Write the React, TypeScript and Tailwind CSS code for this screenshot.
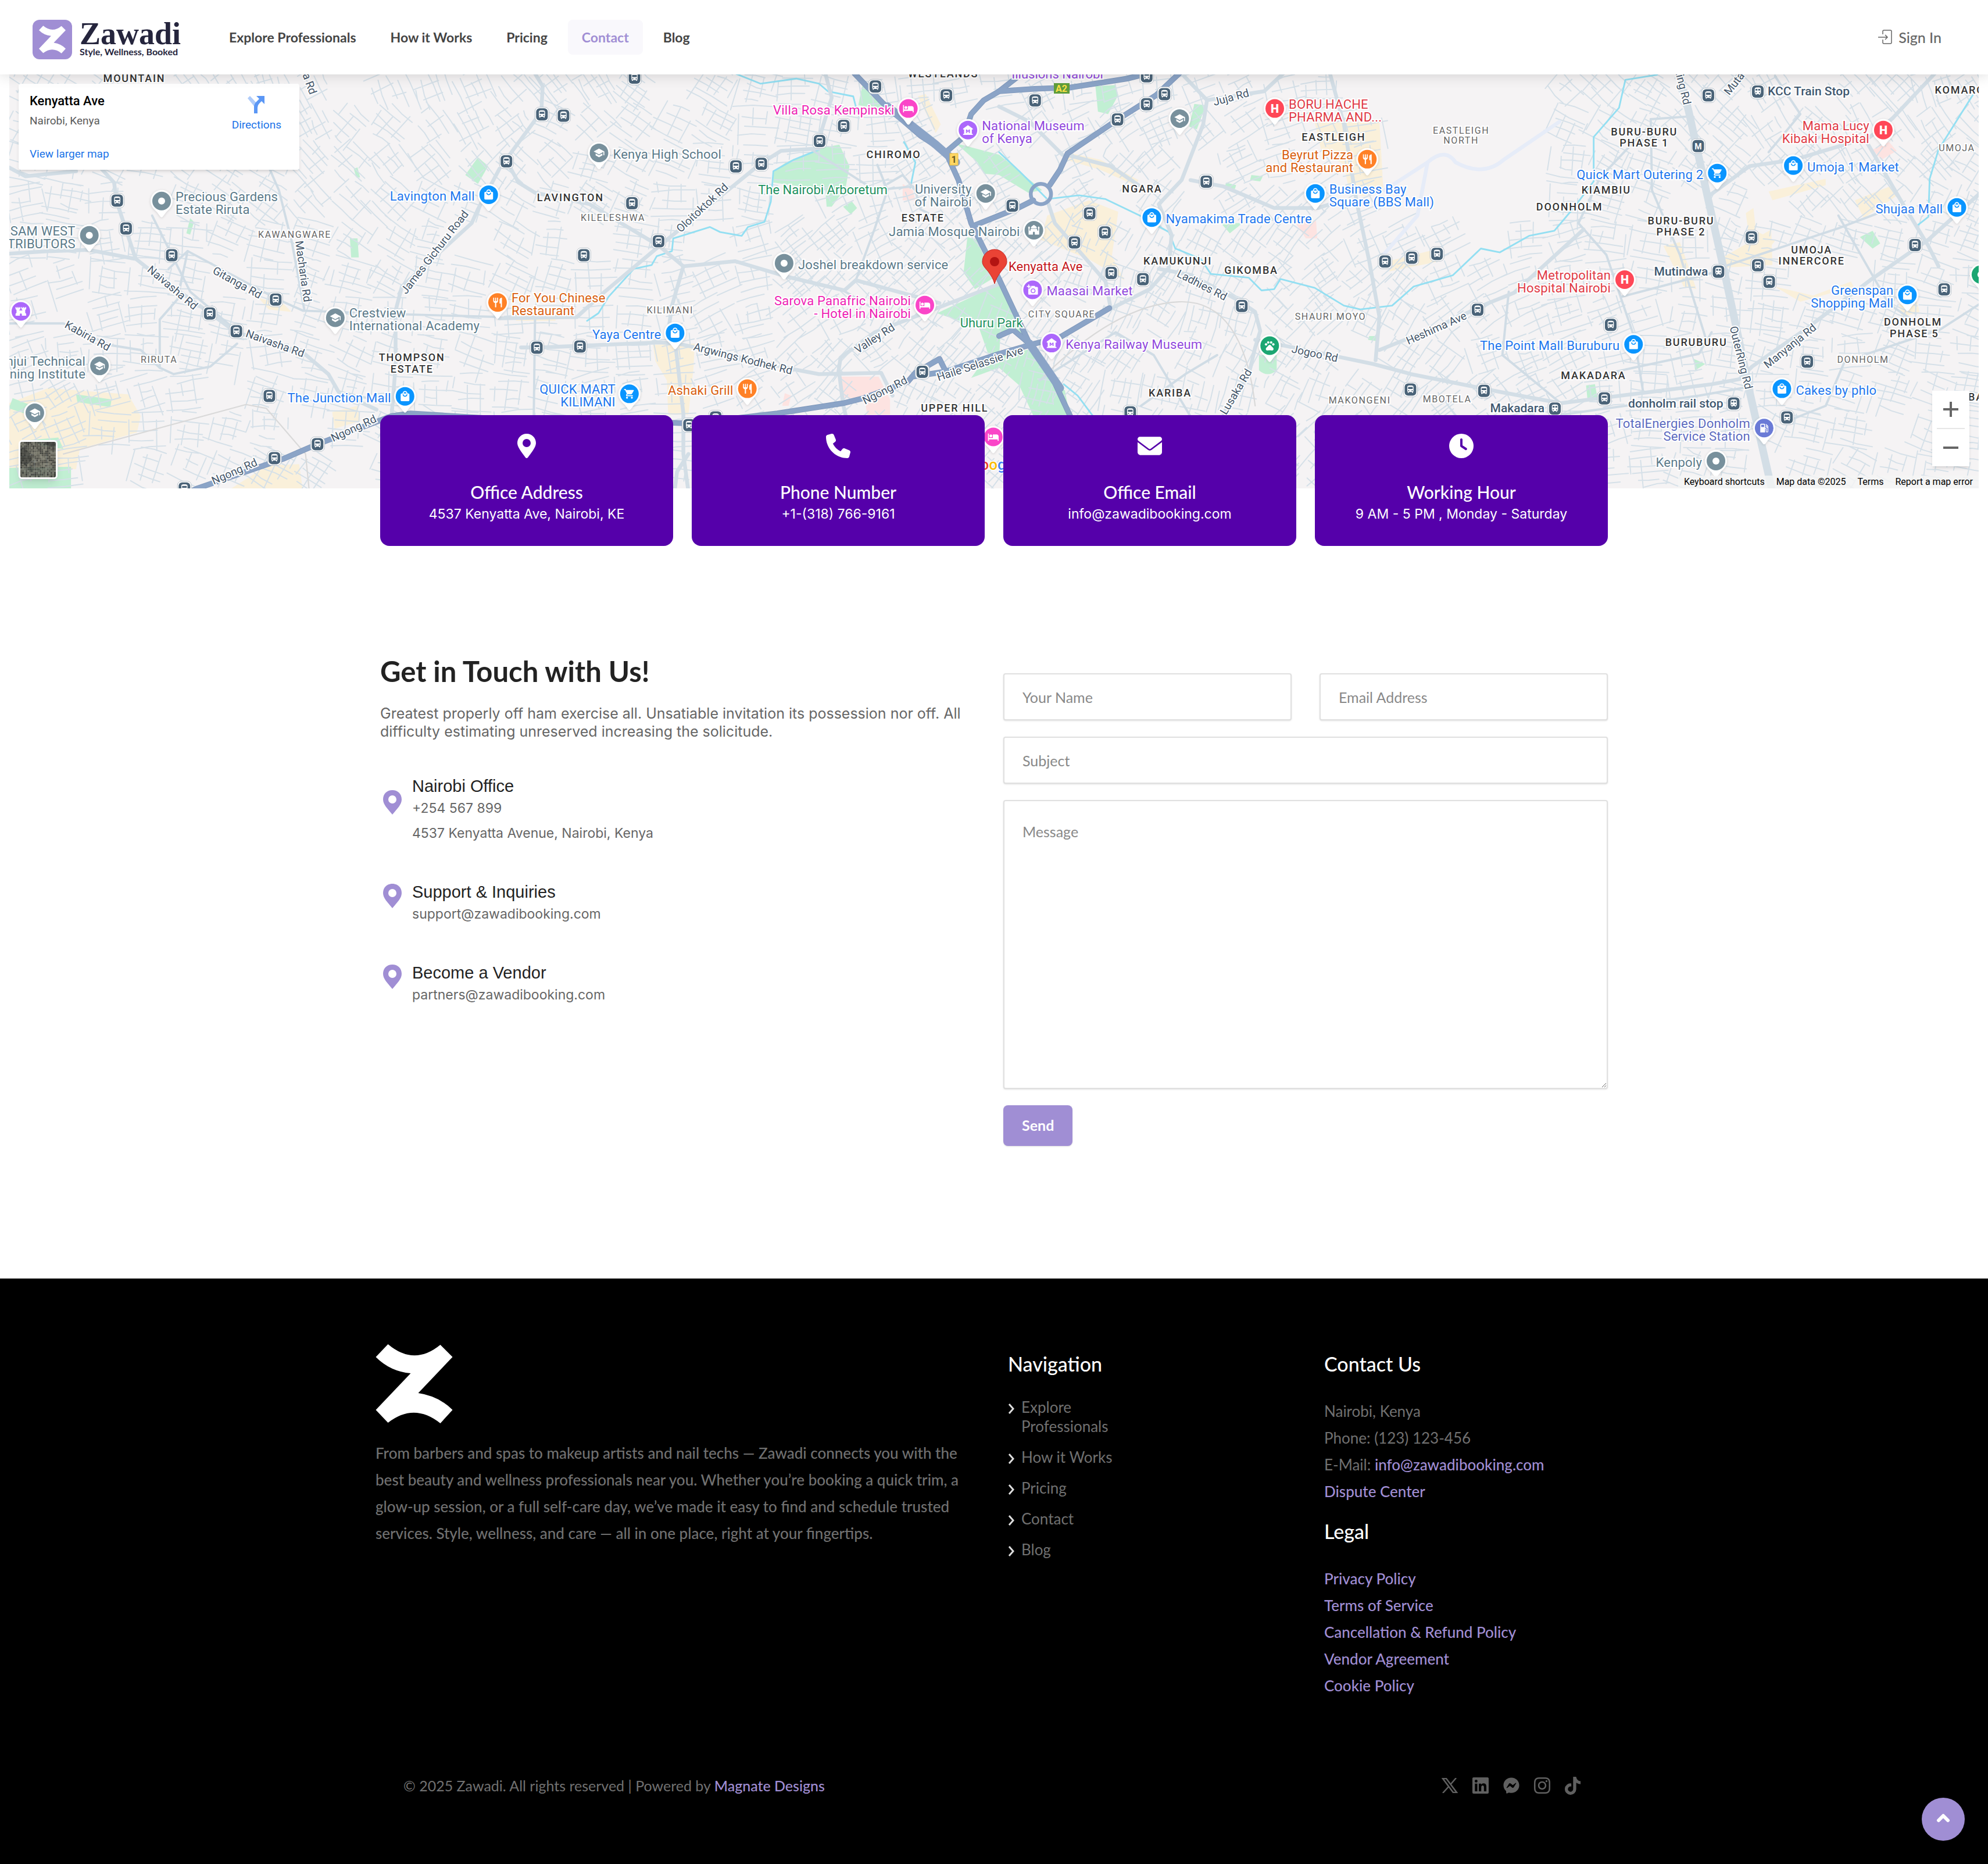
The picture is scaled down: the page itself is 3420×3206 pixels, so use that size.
import type { ComponentType, ReactNode } from "react";
import { FaClock, FaEnvelope, FaFacebookMessenger, FaInstagram, FaLinkedin, FaPhone, FaTiktok } from "react-icons/fa6";
import {
  MdAddAPhoto,
  MdDirectionsBus,
  MdFort,
  MdHotel,
  MdLocalGasStation,
  MdLocalMall,
  MdMosque,
  MdMuseum,
  MdPets,
  MdRestaurant,
  MdSchool,
  MdShoppingCart,
  MdTrain,
} from "react-icons/md";

/* ---------------------------------- map data --------------------------------- */

// Map features are kept in grid units, one unit is UNIT pixels of the drawing.
const UNIT = 2.1811;

type Pt = [number, number];
type Kind =
  | "place"
  | "school"
  | "mall"
  | "cart"
  | "food"
  | "hotel"
  | "hospital"
  | "museum"
  | "camera"
  | "fort"
  | "mosque"
  | "gas"
  | "zoo"
  | "green";

const KINDS: Record<Kind, { pin: string; text: string; icon?: ComponentType<any> }> = {
  place: { pin: "#78909c", text: "#5b7a8a" },
  school: { pin: "#78909c", text: "#5b7a8a", icon: MdSchool },
  mosque: { pin: "#78909c", text: "#5b7a8a", icon: MdMosque },
  mall: { pin: "#0a95ff", text: "#2277ee", icon: MdLocalMall },
  cart: { pin: "#0a95ff", text: "#2277ee", icon: MdShoppingCart },
  food: { pin: "#ff8126", text: "#d9600f", icon: MdRestaurant },
  hotel: { pin: "#fa45c8", text: "#ee22b4", icon: MdHotel },
  hospital: { pin: "#ff4757", text: "#e03a45" },
  museum: { pin: "#ac67fb", text: "#9148dd", icon: MdMuseum },
  camera: { pin: "#ac67fb", text: "#9148dd", icon: MdAddAPhoto },
  fort: { pin: "#ac67fb", text: "#9148dd", icon: MdFort },
  gas: { pin: "#6b7bd6", text: "#5c6bc0", icon: MdLocalGasStation },
  zoo: { pin: "#1ba672", text: "#1e9160", icon: MdPets },
  green: { pin: "#1ba672", text: "#1e9160" },
};

interface Poi {
  kind: Kind;
  at: Pt;
  lines?: string[];
  left?: boolean;
}

const POIS: Poi[] = [
  { kind: "place", at: [127, 159], lines: ["Precious Gardens", "Estate Riruta"] },
  { kind: "place", at: [70, 186], lines: ["SAM WEST", "DISTRIBUTORS"], left: true },
  { kind: "fort", at: [16, 246] },
  { kind: "school", at: [78, 289], lines: ["Wanjui Technical", "Training Institute"], left: true },
  { kind: "school", at: [27, 326] },
  { kind: "school", at: [264, 251], lines: ["Crestview", "International Academy"] },
  { kind: "mall", at: [385, 154], lines: ["Lavington Mall"], left: true },
  { kind: "school", at: [472, 121], lines: ["Kenya High School"] },
  { kind: "food", at: [392, 239], lines: ["For You Chinese", "Restaurant"] },
  { kind: "mall", at: [532, 263], lines: ["Yaya Centre"], left: true },
  { kind: "mall", at: [319, 313], lines: ["The Junction Mall"], left: true },
  { kind: "cart", at: [496, 311], lines: ["QUICK MART", "KILIMANI"], left: true },
  { kind: "food", at: [589, 307], lines: ["Ashaki Grill"], left: true },
  { kind: "place", at: [618, 208], lines: ["Joshel breakdown service"] },
  { kind: "hotel", at: [716, 86], lines: ["Villa Rosa Kempinski"], left: true },
  { kind: "hotel", at: [729, 241], lines: ["Sarova Panafric Nairobi", "- Hotel in Nairobi"], left: true },
  { kind: "hotel", at: [783, 345] },
  { kind: "museum", at: [763, 103], lines: ["National Museum", "of Kenya"] },
  { kind: "school", at: [777, 153], lines: ["University", "of Nairobi"], left: true },
  { kind: "mosque", at: [815, 182], lines: ["Jamia Mosque Nairobi"], left: true },
  { kind: "camera", at: [814, 229], lines: ["Maasai Market"] },
  { kind: "museum", at: [829, 271], lines: ["Kenya Railway Museum"] },
  { kind: "school", at: [930, 94] },
  { kind: "mall", at: [908, 172], lines: ["Nyamakima Trade Centre"] },
  { kind: "hospital", at: [1005, 86], lines: ["BORU HACHE", "PHARMA AND..."] },
  { kind: "food", at: [1078, 126], lines: ["Beyrut Pizza", "and Restaurant"], left: true },
  { kind: "mall", at: [1037, 153], lines: ["Business Bay", "Square (BBS Mall)"] },
  { kind: "zoo", at: [1001, 273] },
  { kind: "hospital", at: [1281, 221], lines: ["Metropolitan", "Hospital Nairobi"], left: true },
  { kind: "mall", at: [1288, 272], lines: ["The Point Mall Buruburu"], left: true },
  { kind: "cart", at: [1354, 137], lines: ["Quick Mart Outering 2"], left: true },
  { kind: "mall", at: [1414, 131], lines: ["Umoja 1 Market"] },
  { kind: "hospital", at: [1485, 103], lines: ["Mama Lucy", "Kibaki Hospital"], left: true },
  { kind: "mall", at: [1543, 164], lines: ["Shujaa Mall"], left: true },
  { kind: "mall", at: [1504, 233], lines: ["Greenspan", "Shopping Mall"], left: true },
  { kind: "green", at: [1562, 217] },
  { kind: "mall", at: [1405, 307], lines: ["Cakes by phlo"] },
  { kind: "gas", at: [1391, 338], lines: ["TotalEnergies Donholm", "Service Station"], left: true },
  { kind: "place", at: [1353, 364], lines: ["Kenpoly"], left: true },
];

const BUS_STOPS: Pt[] = [
  [92, 158], [99, 180], [135, 201], [165, 247], [186, 261], [217, 236], [212, 312], [250, 350],
  [216, 361], [145, 385], [427, 90], [444, 91], [399, 127], [500, 61], [498, 160], [460, 201],
  [519, 190], [580, 131], [600, 129], [646, 111], [665, 99], [690, 68], [746, 75], [423, 274],
  [457, 273], [727, 293], [543, 335], [564, 329], [798, 162], [816, 79], [904, 60], [904, 82],
  [918, 74], [881, 94], [951, 143], [859, 168], [871, 183], [847, 191], [876, 215], [901, 220],
  [979, 241], [891, 325], [1092, 206], [1113, 203], [1133, 200], [1165, 244], [1112, 307],
  [1170, 308], [1270, 256], [1265, 314], [1347, 75], [1381, 187], [1386, 209], [1395, 222],
  [1510, 193], [1533, 228], [1425, 285], [1409, 329],
];

const TRAIN_STOPS: { at: Pt; name: string; left?: boolean }[] = [
  { at: [1386, 72], name: "KCC Train Stop" },
  { at: [1355, 214], name: "Mutindwa", left: true },
  { at: [1367, 318], name: "donholm rail stop", left: true },
  { at: [1226, 322], name: "Makadara", left: true },
];

const AREAS: [number, number, string][] = [
  [105, 62, "MOUNTAIN"],
  [449, 156, "LAVINGTON"],
  [324, 282, "THOMPSON"],
  [324, 291, "ESTATE"],
  [743, 58, "WESTLANDS"],
  [704, 122, "CHIROMO"],
  [727, 172, "ESTATE"],
  [752, 322, "UPPER HILL"],
  [900, 149, "NGARA"],
  [928, 206, "KAMUKUNJI"],
  [986, 213, "GIKOMBA"],
  [922, 310, "KARIBA"],
  [1051, 108, "EASTLEIGH"],
  [1296, 104, "BURU-BURU"],
  [1296, 113, "PHASE 1"],
  [1266, 150, "KIAMBIU"],
  [1237, 163, "DOONHOLM"],
  [1325, 174, "BURU-BURU"],
  [1325, 183, "PHASE 2"],
  [1428, 197, "UMOJA"],
  [1428, 206, "INNERCORE"],
  [1337, 270, "BURUBURU"],
  [1256, 296, "MAKADARA"],
  [1508, 254, "DONHOLM"],
  [1509, 263, "PHASE 5"],
  [1551, 71, "KOMAROCK"],
  [1570, 313, "BARAKA"],
];

const SUB_AREAS: [number, number, string][] = [
  [232, 185, "KAWANGWARE"],
  [125, 284, "RIRUTA"],
  [483, 172, "KILELESHWA"],
  [528, 245, "KILIMANI"],
  [837, 248, "CITY SQUARE"],
  [1049, 250, "SHAURI MOYO"],
  [1072, 316, "MAKONGENI"],
  [1141, 315, "MBOTELA"],
  [1152, 103, "EASTLEIGH"],
  [1152, 111, "NORTH"],
  [1543, 117, "UMOJA"],
  [1469, 284, "DONHOLM"],
];

const ROAD_NAMES: [number, number, number, string][] = [
  [136, 227, 40, "Naivasha Rd"],
  [217, 271, 20, "Naivasha Rd"],
  [187, 223, 29, "Gitanga Rd"],
  [239, 214, 82, "Macharia Rd"],
  [343, 199, -52, "James Gichuru Road"],
  [69, 265, 29, "Kabiria Rd"],
  [185, 372, -24, "Ngong Rd"],
  [279, 338, -25, "Ngong Rd"],
  [554, 164, -43, "Oloitoktok Rd"],
  [586, 283, 14, "Argwings Kodhek Rd"],
  [690, 267, -33, "Valley Rd"],
  [698, 308, -27, "Ngong Rd"],
  [773, 287, -18, "Haile Selassie Ave"],
  [971, 77, -15, "Juja Rd"],
  [948, 225, 27, "Ladhies Rd"],
  [1037, 279, 12, "Jogoo Rd"],
  [975, 309, -59, "Lusaka Rd"],
  [1133, 259, -24, "Heshima Ave"],
  [1327, 68, 76, "Ring Rd"],
  [1373, 282, 76, "OuterRing Rd"],
  [1412, 273, -39, "Manyanja Rd"],
  [244, 66, 70, "a Rd"],
  [1368, 66, -52, "Muta"],
];

const HIGHWAYS = [
  "M674 58L696 81L726 107L746 120L756 142L766 176L788 220L812 271L832 302L845 330",
  "M746 120L760 108L766 90L776 79L788 72L816 70L844 69L889 62L909 57",
  "M788 72L806 58",
  "M930 58L912 75L882 94L842 121L836 134L828 146",
  "M815 158L803 164L788 170L768 178",
  "M145 390L156 385L223 362L251 350L309 328L324 326L420 332L520 333L545 334L613 326L665 318L681 314L716 301L722 294L741 283L746 293L720 297",
  "M746 293L788 279L816 271L836 266L875 243",
  "M788 265L799 260L812 271",
];

const MAIN_ROADS = [
  "M80 133L90 144L92 159L99 180L107 204L126 219L163 245L186 262L239 278L259 295L267 309L297 323",
  "M7 200L40 198L70 197L106 204",
  "M7 132L20 139L60 135",
  "M394 133L377 165L372 176L317 226L312 245L312 289L309 326",
  "M422 58L428 68L427 88L399 126L409 144L422 152L465 161L520 194L539 210L580 206L620 218L666 229L675 221L741 239",
  "M539 210L530 241L528 255L533 274L539 326L539 358L543 388",
  "M543 358L534 372L532 388",
  "M411 274L427 274L520 270L535 271L625 291L646 295L695 294L704 312",
  "M661 295L663 282L690 262L721 250L788 224",
  "M662 295L665 319L670 340",
  "M520 194L600 129L616 119L646 117L648 103L656 77L651 58",
  "M520 194L477 230L455 250L394 251",
  "M932 58L952 79L949 98L932 142L914 161L924 185L922 211L907 228L877 243",
  "M952 79L997 72L1012 58",
  "M914 212L940 217L977 237L990 246L994 261L990 274L985 295L965 326",
  "M990 268L1020 274L1083 287L1113 295L1183 309L1231 318L1294 310L1350 303L1372 299L1382 289L1425 259L1475 221L1521 189L1561 153",
  "M1049 58L1060 98L1070 159L1080 206L1088 250L1085 284",
  "M939 142L965 147L1005 164L1040 164L1052 160",
  "M1088 276L1133 258L1174 239L1194 231L1249 181",
  "M1350 153L1380 131L1415 126L1475 108L1493 93L1526 58",
  "M1470 108L1501 161L1521 194L1529 210",
  "M841 122L876 131L898 146",
  "M788 84L812 96L838 122",
  "M826 158L832 176L872 222L876 243",
];

const SIDE_ROADS = [
  "M7 255L50 255L86 272L111 276L126 290L137 295L166 289L187 271",
  "M148 198L219 236L239 245L322 248L394 250",
  "M126 290L126 252L140 236L148 198L133 212",
  "M213 134L220 150L230 190L240 244",
  "M267 309L309 318L312 289",
  "M188 262L150 230L120 170",
  "M422 250L421 328",
  "M665 229L700 250M675 221L690 180L700 150L692 130",
  "M1245 176L1267 201L1289 266L1296 309",
  "M1279 234L1355 214",
  "M1302 94L1303 150L1325 201L1347 272",
  "M1270 294L1340 279L1350 262",
  "M1302 94L1330 92",
  "M1245 176L1262 140L1300 100",
  "M1415 330L1440 320L1455 285L1530 260L1561 240",
  "M1450 170L1490 240L1520 260",
  "M1360 210L1450 180L1500 161",
  "M1210 330L1340 312L1380 305",
  "M1395 120L1420 90L1400 60",
  "M1190 230L1185 280L1231 318",
  "M640 118L690 150L720 147M700 145L712 138L722 150L726 165L740 172",
  "M900 320L935 295L960 280",
  "M820 300L880 262L910 280L940 330",
];

const RIVERS = [
  "M463 253L472 247L480 234L500 212L514 209L518 202L530 198L531 188L560 179L568 183L585 186L590 179L603 175L608 159L610 135L626 126L646 118",
  "M580 58L600 66L628 62L646 66L653 72L673 76L676 88",
  "M788 120L804 135L826 157L851 154L872 157L899 170L922 183L927 196L947 204L955 216L985 219L995 229L1005 228L1010 220L1037 227L1060 241L1073 244L1098 241L1115 226L1146 217L1168 196L1183 199L1206 186L1226 182L1242 163L1257 143L1257 108L1277 85L1282 63L1307 59",
  "M1556 75L1529 118L1522 141L1521 171L1512 178",
  "M839 303L850 312L862 328",
  "M713 112L722 128L718 148",
];

const GREENS = [
  "M610 135L620 128L646 117L662 114L670 131L667 148L656 163L652 163L651 150L610 144Z",
  "M739 247L788 224L811 269L799 260L789 266L788 281L779 278L772 258Z",
  "M776 284L814 275L829 299L840 308L844 330L816 330L804 304L788 290L766 298Z",
  "M763 187L770 189L784 219L769 228L760 215Z",
  "M754 113L788 122L804 135L822 150L811 152L788 138L776 137L771 128Z",
  "M864 68L880 67L882 75L874 90L866 88Z",
  "M942 82L951 83L944 102L938 100Z",
  "M680 68L686 68L697 86L677 83Z",
  "M377 124L385 131L377 145L367 138Z",
  "M276 188H282L283 203H277Z",
  "M150 172L153 175L150 185L147 184Z",
  "M279 133L282 132L284 140L281 140Z",
  "M665 163L672 159L676 164L671 169Z",
  "M60 311L88 315L87 321L61 317Z",
  "M10 314L23 319L19 326L7 322Z",
  "M7 369L56 368V388H7Z",
  "M24 347L46 345L50 354L34 352Z",
  "M1467 187L1477 182L1483 192L1477 196Z",
  "M1336 283L1345 287L1337 292Z",
  "M1251 304L1258 303L1260 314L1252 314Z",
  "M993 280H1007V292Q1000 298 993 292Z",
  "M963 176L980 176L970 184Z",
  "M987 138L996 139L994 143L986 142Z",
  "M967 144L975 146L974 149L966 148Z",
  "M1080 265L1087 265L1086 269L1079 268Z",
];

const SANDS = [
  "M7 318L38 306L101 311L111 328L108 341L63 354L60 370H7Z",
  "M211 367L236 366L239 388H178Z",
  "M826 170L859 158L882 167L877 202L887 221L860 205L821 189Z",
  "M1037 97L1088 96L1091 148L1075 155L1064 150L1060 130L1042 118Z",
  "M515 272L548 271L547 290L543 327H527L526 300L517 285Z",
  "M1357 204L1397 181L1398 209L1360 211Z",
  "M1377 168L1383 164L1385 182L1400 190L1392 200L1380 190Z",
  "M1395 151L1440 141V146L1398 158Z",
  "M1463 158L1493 146L1498 153L1470 172Z",
  "M1400 226L1430 233L1460 222L1462 226L1420 238Z",
  "M1312 194L1325 191L1338 228L1328 226Z",
  "M1498 240L1512 238L1514 246L1500 250Z",
  "M1095 206L1135 196L1136 206L1096 214Z",
  "M841 120L868 126L898 142L895 146L868 134L841 126Z",
  "M407 249H440L438 253H407Z",
  "M724 76L730 74L742 98L738 105Z",
  "M262 325L282 320L284 332L264 338Z",
  "M204 235L224 240L230 246L212 244Z",
];

const PINKS = [
  "M663 297L693 297L702 315V327H684L682 314H664Z",
  "M1022 176L1038 174L1039 188L1030 188Z",
  "M1477 118L1490 112L1496 119L1484 126Z",
  "M712 145L720 150L722 158L712 158Z",
  "M619 310L624 312L622 320L617 320Z",
];

// mulberry32, keeps the street pattern the same on every load
function seeded(seed: number) {
  return () => {
    seed = (seed + 0x6d2b79f5) | 0;
    let t = Math.imul(seed ^ (seed >>> 15), 1 | seed);
    t = (t + Math.imul(t ^ (t >>> 7), 61 | t)) ^ t;
    return ((t ^ (t >>> 14)) >>> 0) / 4294967296;
  };
}

function buildStreets() {
  const rnd = seeded(254);
  let d = "";
  for (let cx = 20; cx < 1570; cx += 32) {
    for (let cy = 70; cy < 400; cy += 30) {
      // airfield north-east of Eastleigh has no streets
      if (cx > 1095 && cx < 1230 && cy < 190) continue;
      if (rnd() < 0.07) continue;
      const angle = Math.sin(cx / 190) * 0.7 + Math.cos(cy / 90) * 0.5 + (rnd() - 0.5) * 0.5;
      const cos = Math.cos(angle);
      const sin = Math.sin(angle);
      const step = 5 + rnd() * 3;
      const put = (u: number, v: number) =>
        `${(cx + u * cos - v * sin).toFixed(1)} ${(cy + u * sin + v * cos).toFixed(1)}`;
      for (let v = -15; v <= 15; v += step) {
        const a = -19 + rnd() * 16;
        const b = 3 + rnd() * 16;
        const bend = (rnd() - 0.5) * 4;
        d += `M${put(a, v)}L${put((a + b) / 2, v + bend)}L${put(b, v + bend)}`;
      }
      for (let u = -14; u <= 15; u += step * 1.5) {
        const a = -17 + rnd() * 14;
        d += `M${put(u, a)}L${put(u + (rnd() - 0.5) * 3, a + 8 + rnd() * 18)}`;
      }
    }
  }
  return d;
}

const STREETS = buildStreets();

/* --------------------------------- map pieces -------------------------------- */

function Paths({ list, ...rest }: { list: string[]; fill?: string; stroke?: string; strokeWidth?: number }) {
  return (
    <g {...rest}>
      {list.map((d) => (
        <path key={d} d={d} />
      ))}
    </g>
  );
}

function PoiPin({ poi }: { poi: Poi }) {
  const { pin, text, icon: Icon } = KINDS[poi.kind];
  const x = poi.at[0] * UNIT + 1;
  const y = poi.at[1] * UNIT - 1;
  const lines = poi.lines ?? [];
  const top = y + (lines.length > 1 ? 0 : 10);
  return (
    <g>
      <g className="drop-shadow-sm">
        <path
          d="M-19 0A19 19 0 0 1 19 0C19 9 13 14 8 19L2 27Q0 29 -2 27L-8 19C-13 14 -19 9 -19 0Z"
          transform={`translate(${x} ${y})`}
          fill="#fff"
        />
      </g>
      <circle cx={x} cy={y} r={16} fill={pin} />
      {Icon && <Icon x={x - 10} y={y - 10} size={20} color="#fff" />}
      {(poi.kind === "place" || poi.kind === "green") && <circle cx={x} cy={y} r={6} fill="#fff" />}
      {poi.kind === "hospital" && (
        <text x={x} y={y + 7} textAnchor="middle" className="text-xl font-black" fill="#fff">
          H
        </text>
      )}
      {lines.map((line, i) => (
        <text
          key={line}
          x={poi.left ? x - 24 : x + 24}
          y={top + i * 22}
          textAnchor={poi.left ? "end" : "start"}
          className="text-[22px] tracking-[0.2px]"
          fill={text}
          stroke="#fff"
          strokeWidth={4}
          paintOrder="stroke"
        >
          {line}
        </text>
      ))}
    </g>
  );
}

function StopBadge({ at, children }: { at: Pt; children: ReactNode }) {
  const x = at[0] * UNIT + 1;
  const y = at[1] * UNIT;
  return (
    <g transform={`translate(${x} ${y})`}>
      <rect x={-12} y={-12} width={24} height={25} rx={7} fill="#fff" stroke="#b9c2ca" />
      <rect x={-10} y={-10} width={20} height={21} rx={6} fill="#4a6378" />
      {children}
    </g>
  );
}

function MapLabels() {
  return (
    <>
      <g className="text-[19px]" fill="#44566a" stroke="#fff" strokeWidth={4} paintOrder="stroke" textAnchor="middle">
        {ROAD_NAMES.map(([x, y, angle, name]) => (
          <text key={`${name}${x}`} transform={`translate(${x * UNIT} ${y * UNIT}) rotate(${angle})`} y={6}>
            {name}
          </text>
        ))}
      </g>
      <g
        className="text-[18px] font-medium tracking-widest"
        fill="#333"
        stroke="#fff"
        strokeWidth={4}
        paintOrder="stroke"
        textAnchor="middle"
      >
        {AREAS.map(([x, y, name]) => (
          <text key={`${name}${x}${y}`} x={x * UNIT + 2} y={y * UNIT + 6}>
            {name}
          </text>
        ))}
      </g>
      <g
        className="text-base tracking-widest"
        fill="#666"
        stroke="#fff"
        strokeWidth={4}
        paintOrder="stroke"
        textAnchor="middle"
      >
        {SUB_AREAS.map(([x, y, name]) => (
          <text key={`${name}${x}${y}`} x={x * UNIT + 1} y={y * UNIT + 5}>
            {name}
          </text>
        ))}
      </g>
      <g className="text-[22px]" fill="#1e9160" stroke="#fff" strokeWidth={4} paintOrder="stroke" textAnchor="middle">
        <text x={649 * UNIT} y={153 * UNIT}>The Nairobi Arboretum</text>
        <text x={782 * UNIT} y={258 * UNIT}>Uhuru Park</text>
        <text x={834 * UNIT} y={62 * UNIT} fill="#9148dd">Illusions Nairobi</text>
      </g>
    </>
  );
}

function MapCanvas() {
  return (
    <svg
      viewBox="16 128 3388 712"
      preserveAspectRatio="xMidYMid slice"
      className="h-full w-full bg-[#f5f3f4] font-[Roboto,sans-serif]"
      role="img"
      aria-label="Map of Nairobi"
    >
      <g transform={`scale(${UNIT})`} fill="none" strokeLinejoin="round" strokeLinecap="round">
        <Paths list={SANDS} fill="#faf0da" />
        <Paths list={PINKS} fill="#fde3e1" />
        <Paths list={GREENS} fill="#c1efd3" />
        <path d={STREETS} stroke="#d5e0e8" strokeWidth={0.9} />
        <path
          d="M1092 150L1126 128Q1140 116 1148 128Q1170 140 1186 126L1230 96M1126 128L1118 170L1092 200"
          stroke="#e6ecf8"
          strokeWidth={3}
        />
        <path d="M50 358L194 319L210 322L241 358L244 388M820 300Q880 240 930 238T990 320" stroke="#d9d9d9" strokeWidth={1} />
        <Paths list={RIVERS} stroke="#93dff2" strokeWidth={1.3} />
        <Paths list={SIDE_ROADS} stroke="#d0dce5" strokeWidth={1.8} />
        <Paths list={MAIN_ROADS} stroke="#d3dee6" strokeWidth={3} />
        <path d="M1324 56L1332 88L1347 156L1360 214L1375 284L1380 309L1398 388" stroke="#d3dee6" strokeWidth={6} />
        <Paths list={HIGHWAYS} stroke="#7e97ba" strokeWidth={4.4} />
        <Paths list={HIGHWAYS} stroke="#8ba4c7" strokeWidth={3.6} />
        <path d="M700 84L738 114L754 128M812 271L836 306" stroke="#8ba4c7" strokeWidth={6.5} />
        <circle cx={821} cy={153} r={8} stroke="#8ba4c7" strokeWidth={3} />
      </g>

      <g fontWeight={700} className="text-base" textAnchor="middle">
        <rect x={1634} y={264} width={14} height={20} fill="#fdd663" stroke="#e8b93c" />
        <text x={1641} y={280} fill="#6b5a1e">1</text>
        <rect x={1813} y={143} width={27} height={18} fill="#5f9d3c" />
        <text x={1826} y={158} fill="#fde047">A2</text>
      </g>

      <MapLabels />

      {BUS_STOPS.map((at) => (
        <StopBadge key={at.join()} at={at}>
          <MdDirectionsBus x={-8} y={-8} size={16} color="#fff" />
        </StopBadge>
      ))}
      {TRAIN_STOPS.map((stop) => (
        <g key={stop.name}>
          <StopBadge at={stop.at}>
            <MdTrain x={-8} y={-8} size={16} color="#fff" />
          </StopBadge>
          <text
            x={stop.at[0] * UNIT + (stop.left ? -17 : 18)}
            y={stop.at[1] * UNIT + 7}
            textAnchor={stop.left ? "end" : "start"}
            className="text-[21px] font-medium"
            fill="#3f5870"
            stroke="#fff"
            strokeWidth={4}
            paintOrder="stroke"
          >
            {stop.name}
          </text>
        </g>
      ))}
      <StopBadge at={[1339, 115]}>
        <text y={6} textAnchor="middle" className="text-sm font-bold" fill="#fff">
          M
        </text>
      </StopBadge>

      {POIS.map((poi) => (
        <PoiPin key={poi.at.join()} poi={poi} />
      ))}

      <g className="text-[26px] font-medium">
        <text x={1710} y={808} textAnchor="middle" stroke="#fff" strokeWidth={3} paintOrder="stroke">
          <tspan fill="#4285f4">G</tspan>
          <tspan fill="#ea4335">o</tspan>
          <tspan fill="#fbbc05">o</tspan>
          <tspan fill="#4285f4">g</tspan>
          <tspan fill="#34a853">l</tspan>
          <tspan fill="#ea4335">e</tspan>
        </text>
      </g>

      {/* selected place */}
      <path
        d="M1711 488C1709 480 1705 474 1700 467C1694 460 1690 456 1690 450A21 21 0 0 1 1732 450C1732 456 1728 460 1722 467C1717 474 1713 480 1711 488Z"
        fill="#ea4335"
        stroke="#c5221f"
      />
      <circle cx={1711} cy={450} r={8} fill="#b31412" />
      <text x={1735} y={466} className="text-[22px]" fill="#c5171c" stroke="#fff" strokeWidth={4} paintOrder="stroke">
        Kenyatta Ave
      </text>
    </svg>
  );
}

function SatelliteThumb() {
  const rnd = seeded(9);
  const cells = Array.from({ length: 400 }, (_, i) => ({
    x: (i % 20) * 3,
    y: Math.floor(i / 20) * 3,
    fill: ["#4a4b45", "#5d5e55", "#6a6b60", "#52534b", "#3e3f3b", "#74756a"][Math.floor(rnd() * 6)],
  }));
  return (
    <svg viewBox="0 0 60 60" className="h-full w-full">
      {cells.map((c) => (
        <rect key={`${c.x}-${c.y}`} x={c.x} y={c.y} width={3} height={3} fill={c.fill} />
      ))}
      <path d="M0 8L14 16L20 30L10 40L0 36ZM36 0H60V8L46 6Z" fill="#2c2d2b" opacity={0.5} />
    </svg>
  );
}

function MapSection() {
  return (
    <section className="relative mx-4 h-[712px] overflow-hidden">
      <MapCanvas />

      <div className="absolute top-4 left-4 flex h-[148px] w-[483px] justify-between rounded-sm bg-white px-[19px] pt-4 font-[Roboto,sans-serif] shadow-md">
        <div className="flex flex-col">
          <h2 className="text-[22px] leading-7 font-medium text-black">Kenyatta Ave</h2>
          <p className="mt-[6px] text-[19px] leading-7 text-[#5b5b5b]">Nairobi, Kenya</p>
          <a href="#map" className="mt-[29px] text-[19px] leading-7 text-[#1a73e8]">
            View larger map
          </a>
        </div>
        <a href="#directions" className="mr-3 flex flex-col items-center text-[19px] leading-7 text-[#1a73e8]">
          <svg viewBox="0 0 30 31" className="mt-1 h-[31px] w-[30px]">
            <path d="M0 5L4 1L18 16L13 21Z" fill="#aecbfa" />
            <path d="M11 31V20Q11 15 15 11L20 6L15 1H29V15L24 10L20 14Q17 17 17 21V31Z" fill="#5b97f5" />
          </svg>
          <span className="mt-[6px]">Directions</span>
        </a>
      </div>

      <button
        type="button"
        aria-label="Show satellite imagery"
        className="absolute bottom-4 left-4 h-[67px] w-[67px] overflow-hidden rounded-md border-3 border-white shadow-lg"
      >
        <SatelliteThumb />
      </button>

      <div className="absolute right-4 bottom-[38px] flex w-16 flex-col items-center bg-white shadow-md">
        <button type="button" aria-label="Zoom in" className="flex h-16 w-full items-center justify-center">
          <svg viewBox="0 0 26 26" className="h-[26px] w-[26px]" stroke="#666" strokeWidth={4}>
            <path d="M13 0V26M0 13H26" />
          </svg>
        </button>
        <div className="h-0.5 w-12 bg-[#e6e6e6]" />
        <button type="button" aria-label="Zoom out" className="flex h-16 w-full items-center justify-center">
          <svg viewBox="0 0 26 26" className="h-[26px] w-[26px]" stroke="#666" strokeWidth={4}>
            <path d="M0 13H26" />
          </svg>
        </button>
      </div>

      <div className="absolute right-0 bottom-0 flex gap-5 bg-[#f5f5f5]/80 px-[10px] font-[Roboto,sans-serif] text-base leading-[22px] text-black">
        <button type="button">Keyboard shortcuts</button>
        <span>Map data ©2025</span>
        <a href="#terms">Terms</a>
        <a href="#report">Report a map error</a>
      </div>
    </section>
  );
}

/* ----------------------------------- header ---------------------------------- */

function ZMark({ className }: { className?: string }) {
  return (
    <svg viewBox="0 0 132 136" className={className} fill="#fff" aria-hidden="true">
      <path d="M21 0Q66 38 111 1L132 22L73 84Q108 89 132 113L111 136Q66 100 21 135L0 113L60 50Q25 47 0 22Z" />
    </svg>
  );
}

const NAV = ["Explore Professionals", "How it Works", "Pricing", "Contact", "Blog"];

function Header() {
  return (
    <header className="relative z-10 flex h-32 items-center bg-white pr-20 pl-14 shadow-[0_0_24px_rgba(0,0,0,0.16)]">
      <a href="#home" className="flex items-center gap-[13px] pt-2">
        <span className="flex h-[68px] w-[68px] items-center justify-center rounded-xl bg-[#a08ed4]">
          <ZMark className="h-12 w-[46px]" />
        </span>
        <span className="flex w-[174px] flex-col whitespace-nowrap text-[#25253d]">
          <span className="font-['Liberation_Serif',serif] text-[54px] leading-[42px] font-bold">Zawadi</span>
          <span className="font-[Lato,sans-serif] text-base leading-5 font-bold">Style, Wellness, Booked</span>
        </span>
      </a>
      <nav className="ml-[59px] flex gap-[11px]">
        {NAV.map((item) => (
          <a
            key={item}
            href="#nav"
            className={
              item === "Contact"
                ? "rounded-lg bg-[#f9f8fc] px-6 text-[23px] leading-[60px] font-bold text-[#a08ed4]"
                : "px-6 text-[23px] leading-[60px] font-bold text-[#444]"
            }
          >
            {item}
          </a>
        ))}
      </nav>
      <a href="#signin" className="ml-auto flex items-center gap-[11px] text-[25px] leading-8 font-medium text-[#666]">
        <svg viewBox="0 0 24 26" className="h-[26px] w-6" fill="none" stroke="#666" strokeWidth={1.5} aria-hidden="true">
          <path d="M8 8V3Q8 1 10 1H21Q23 1 23 3V22Q23 24 21 24H10Q8 24 8 22V17M0 13H16M12 9L16 13L12 17" />
        </svg>
        Sign In
      </a>
    </header>
  );
}

/* -------------------------------- contact body ------------------------------- */

function PinIcon() {
  return (
    <svg viewBox="0 0 32 42" className="h-[42px] w-8" fill="currentColor" aria-hidden="true">
      <path
        fillRule="evenodd"
        d="M16 0C7 0 0 7 0 16C0 24 10 35 14 41Q16 43 18 41C22 35 32 24 32 16C32 7 25 0 16 0ZM16 9A7 7 0 1 1 16 23A7 7 0 1 1 16 9Z"
      />
    </svg>
  );
}

function SharpPinIcon() {
  return (
    <svg viewBox="0 0 32 42" className="h-[42px] w-8" fill="currentColor" aria-hidden="true">
      <path
        fillRule="evenodd"
        d="M16 0C7 0 0 6 0 16C0 25 8 32 16 42C24 32 32 25 32 16C32 6 25 0 16 0ZM16 9A7 7 0 1 1 16 23A7 7 0 1 1 16 9Z"
      />
    </svg>
  );
}

const CARDS = [
  { icon: <PinIcon />, title: "Office Address", text: "4537 Kenyatta Ave, Nairobi, KE" },
  { icon: <FaPhone size={42} />, title: "Phone Number", text: "+1-(318) 766-9161" },
  { icon: <FaEnvelope size={42} />, title: "Office Email", text: "info@zawadibooking.com" },
  { icon: <FaClock size={42} />, title: "Working Hour", text: "9 AM - 5 PM , Monday - Saturday" },
];

function InfoCards() {
  return (
    <div className="relative z-10 mx-auto -mt-[126px] grid w-full max-w-[2112px] grid-cols-4 gap-8">
      {CARDS.map((card) => (
        <div key={card.title} className="flex h-[225px] flex-col items-center rounded-2xl bg-[#5500aa] pt-8 text-white">
          {card.icon}
          <h3 className="mt-10 text-[30px] leading-9 font-medium">{card.title}</h3>
          <p className="font-[Inter,sans-serif] text-[23px] leading-10">{card.text}</p>
        </div>
      ))}
    </div>
  );
}

const OFFICES = [
  { title: "Nairobi Office", lines: ["+254 567 899", "4537 Kenyatta Avenue, Nairobi, Kenya"] },
  { title: "Support & Inquiries", lines: ["support@zawadibooking.com"] },
  { title: "Become a Vendor", lines: ["partners@zawadibooking.com"] },
];

function Offices() {
  return (
    <ul className="mt-[61px] flex flex-col gap-[62px]">
      {OFFICES.map((office) => (
        <li key={office.title} className="flex items-center gap-[18px] pl-[5px]">
          <span className="mb-[30px] text-[#a08ed4]">
            <SharpPinIcon />
          </span>
          <div>
            <h3 className="font-['Liberation_Sans',sans-serif] text-[29px] leading-[34px] text-[#222]">{office.title}</h3>
            {office.lines.map((line) => (
              <p key={line} className="font-[Inter,sans-serif] text-[23px] leading-[43px] text-[#666]">
                {line}
              </p>
            ))}
          </div>
        </li>
      ))}
    </ul>
  );
}

const FIELD =
  "w-full rounded-sm border-2 border-[#e0e0e0] bg-white px-[31px] text-[25px] text-[#666] shadow-sm outline-none placeholder:text-[#888]";

function ContactForm() {
  return (
    <form className="mt-[34px] flex flex-col items-start gap-7">
      <div className="grid w-full grid-cols-2 gap-12">
        <input type="text" aria-label="Your Name" placeholder="Your Name" className={`${FIELD} h-[81px]`} />
        <input type="email" aria-label="Email Address" placeholder="Email Address" className={`${FIELD} h-[81px]`} />
      </div>
      <input type="text" aria-label="Subject" placeholder="Subject" className={`${FIELD} h-[81px]`} />
      <textarea aria-label="Message" placeholder="Message" className={`${FIELD} block h-[497px] pt-[34px] leading-9`} />
      <button type="button" className="h-[70px] rounded-lg bg-[#a08ed4] px-8 text-[25px] font-bold text-white shadow-sm">
        Send
      </button>
    </form>
  );
}

/* ----------------------------------- footer ---------------------------------- */

const LEGAL = ["Privacy Policy", "Terms of Service", "Cancellation & Refund Policy", "Vendor Agreement", "Cookie Policy"];

const SOCIALS = [
  { name: "LinkedIn", icon: <FaLinkedin size={32} /> },
  { name: "Messenger", icon: <FaFacebookMessenger size={28} /> },
  { name: "Instagram", icon: <FaInstagram size={32} /> },
  { name: "TikTok", icon: <FaTiktok size={31} /> },
];

function Footer() {
  return (
    <footer className="bg-black pt-[113px] pb-[112px] text-[26px] text-[#707070]">
      <div className="mx-auto grid w-full max-w-[2176px] grid-cols-4">
        <div className="col-span-2 px-6">
          <ZMark className="h-[136px] w-[133px]" />
          <p className="mt-7 leading-[46px] font-medium">
            From barbers and spas to makeup artists and nail techs — Zawadi connects you with the best beauty and
            wellness professionals near you. Whether you’re booking a quick trim, a glow-up session, or a full
            self-care day, we’ve made it easy to find and schedule trusted services. Style, wellness, and care — all
            in one place, right at your fingertips.
          </p>
        </div>
        <div className="px-6 pt-3">
          <h3 className="text-[34px] leading-[44px] font-medium text-white">Navigation</h3>
          <ul className="mt-9 flex w-[220px] flex-col gap-5">
            {NAV.map((item) => (
              <li key={item} className="flex gap-[11px]">
                <svg viewBox="0 0 12 18" className="mt-[10px] h-[18px] w-3 shrink-0" fill="none" stroke="#ddd" strokeWidth={3}>
                  <path d="M2 1L9 9L2 17" />
                </svg>
                <a href="#nav" className="leading-[33px]">
                  {item}
                </a>
              </li>
            ))}
          </ul>
        </div>
        <div className="px-6 pt-3">
          <h3 className="text-[34px] leading-[44px] font-medium text-white">Contact Us</h3>
          <div className="mt-9 leading-[46px]">
            <p>Nairobi, Kenya</p>
            <p>Phone: (123) 123-456</p>
            <p>
              E-Mail:{" "}
              <a href="#mail" className="font-medium text-[#a08ed4]">
                info@zawadibooking.com
              </a>
            </p>
            <a href="#dispute" className="font-medium text-[#a08ed4]">
              Dispute Center
            </a>
          </div>
          <h3 className="mt-6 text-[34px] leading-[44px] font-medium text-white">Legal</h3>
          <ul className="mt-9 leading-[46px] font-medium text-[#a08ed4]">
            {LEGAL.map((item) => (
              <li key={item}>
                <a href="#legal">{item}</a>
              </li>
            ))}
          </ul>
        </div>
      </div>
      <div className="mx-auto mt-[126px] flex w-full max-w-[2176px] items-center justify-between pr-[78px] pl-[72px] leading-[46px]">
        <p className="text-[25px]">
          © 2025 Zawadi. All rights reserved | Powered by{" "}
          <a href="#magnate" className="font-medium text-[#a08ed4]">
            Magnate Designs
          </a>
        </p>
        <div className="flex items-center gap-6 text-[#606060]">
          <a href="#x" aria-label="X" className="flex w-[29px] justify-center">
            <svg viewBox="0 0 28 26" className="h-[26px] w-7" fill="none" stroke="currentColor" strokeWidth={2.5}>
              <path d="M2 1H8L26 25H20ZM25 0L15.500 11M12.500 14.500L2 26" />
            </svg>
          </a>
          {SOCIALS.map((social) => (
            <a key={social.name} href="#social" aria-label={social.name} className="flex w-[29px] justify-center">
              <span className="shrink-0">{social.icon}</span>
            </a>
          ))}
        </div>
      </div>
    </footer>
  );
}

export default function App() {
  return (
    <div className="bg-white font-[Lato,sans-serif]">
      <Header />
      <main>
        <MapSection />
        <InfoCards />
        <section className="mx-auto grid w-full max-w-[2112px] grid-cols-2 gap-8 pt-[185px] pb-[228px]">
          <div>
            <h2 className="text-[49px] leading-[60px] font-bold text-[#222]">Get in Touch with Us!</h2>
            <p className="mt-7 font-[Inter,sans-serif] text-[25px] leading-[31px] text-[#666]">
              Greatest properly off ham exercise all. Unsatiable invitation its possession nor off. All difficulty
              estimating unreserved increasing the solicitude.
            </p>
            <Offices />
          </div>
          <ContactForm />
        </section>
      </main>
      <Footer />
      <button
        type="button"
        aria-label="Back to top"
        className="fixed right-10 bottom-10 z-20 flex h-[74px] w-[74px] items-center justify-center rounded-full bg-[#a08ed4]"
      >
        <svg viewBox="0 0 24 16" className="mb-1 h-4 w-6" fill="none" stroke="#fff" strokeWidth={6} strokeLinecap="round" strokeLinejoin="round">
          <path d="M4 12L12 4L20 12" />
        </svg>
      </button>
    </div>
  );
}
